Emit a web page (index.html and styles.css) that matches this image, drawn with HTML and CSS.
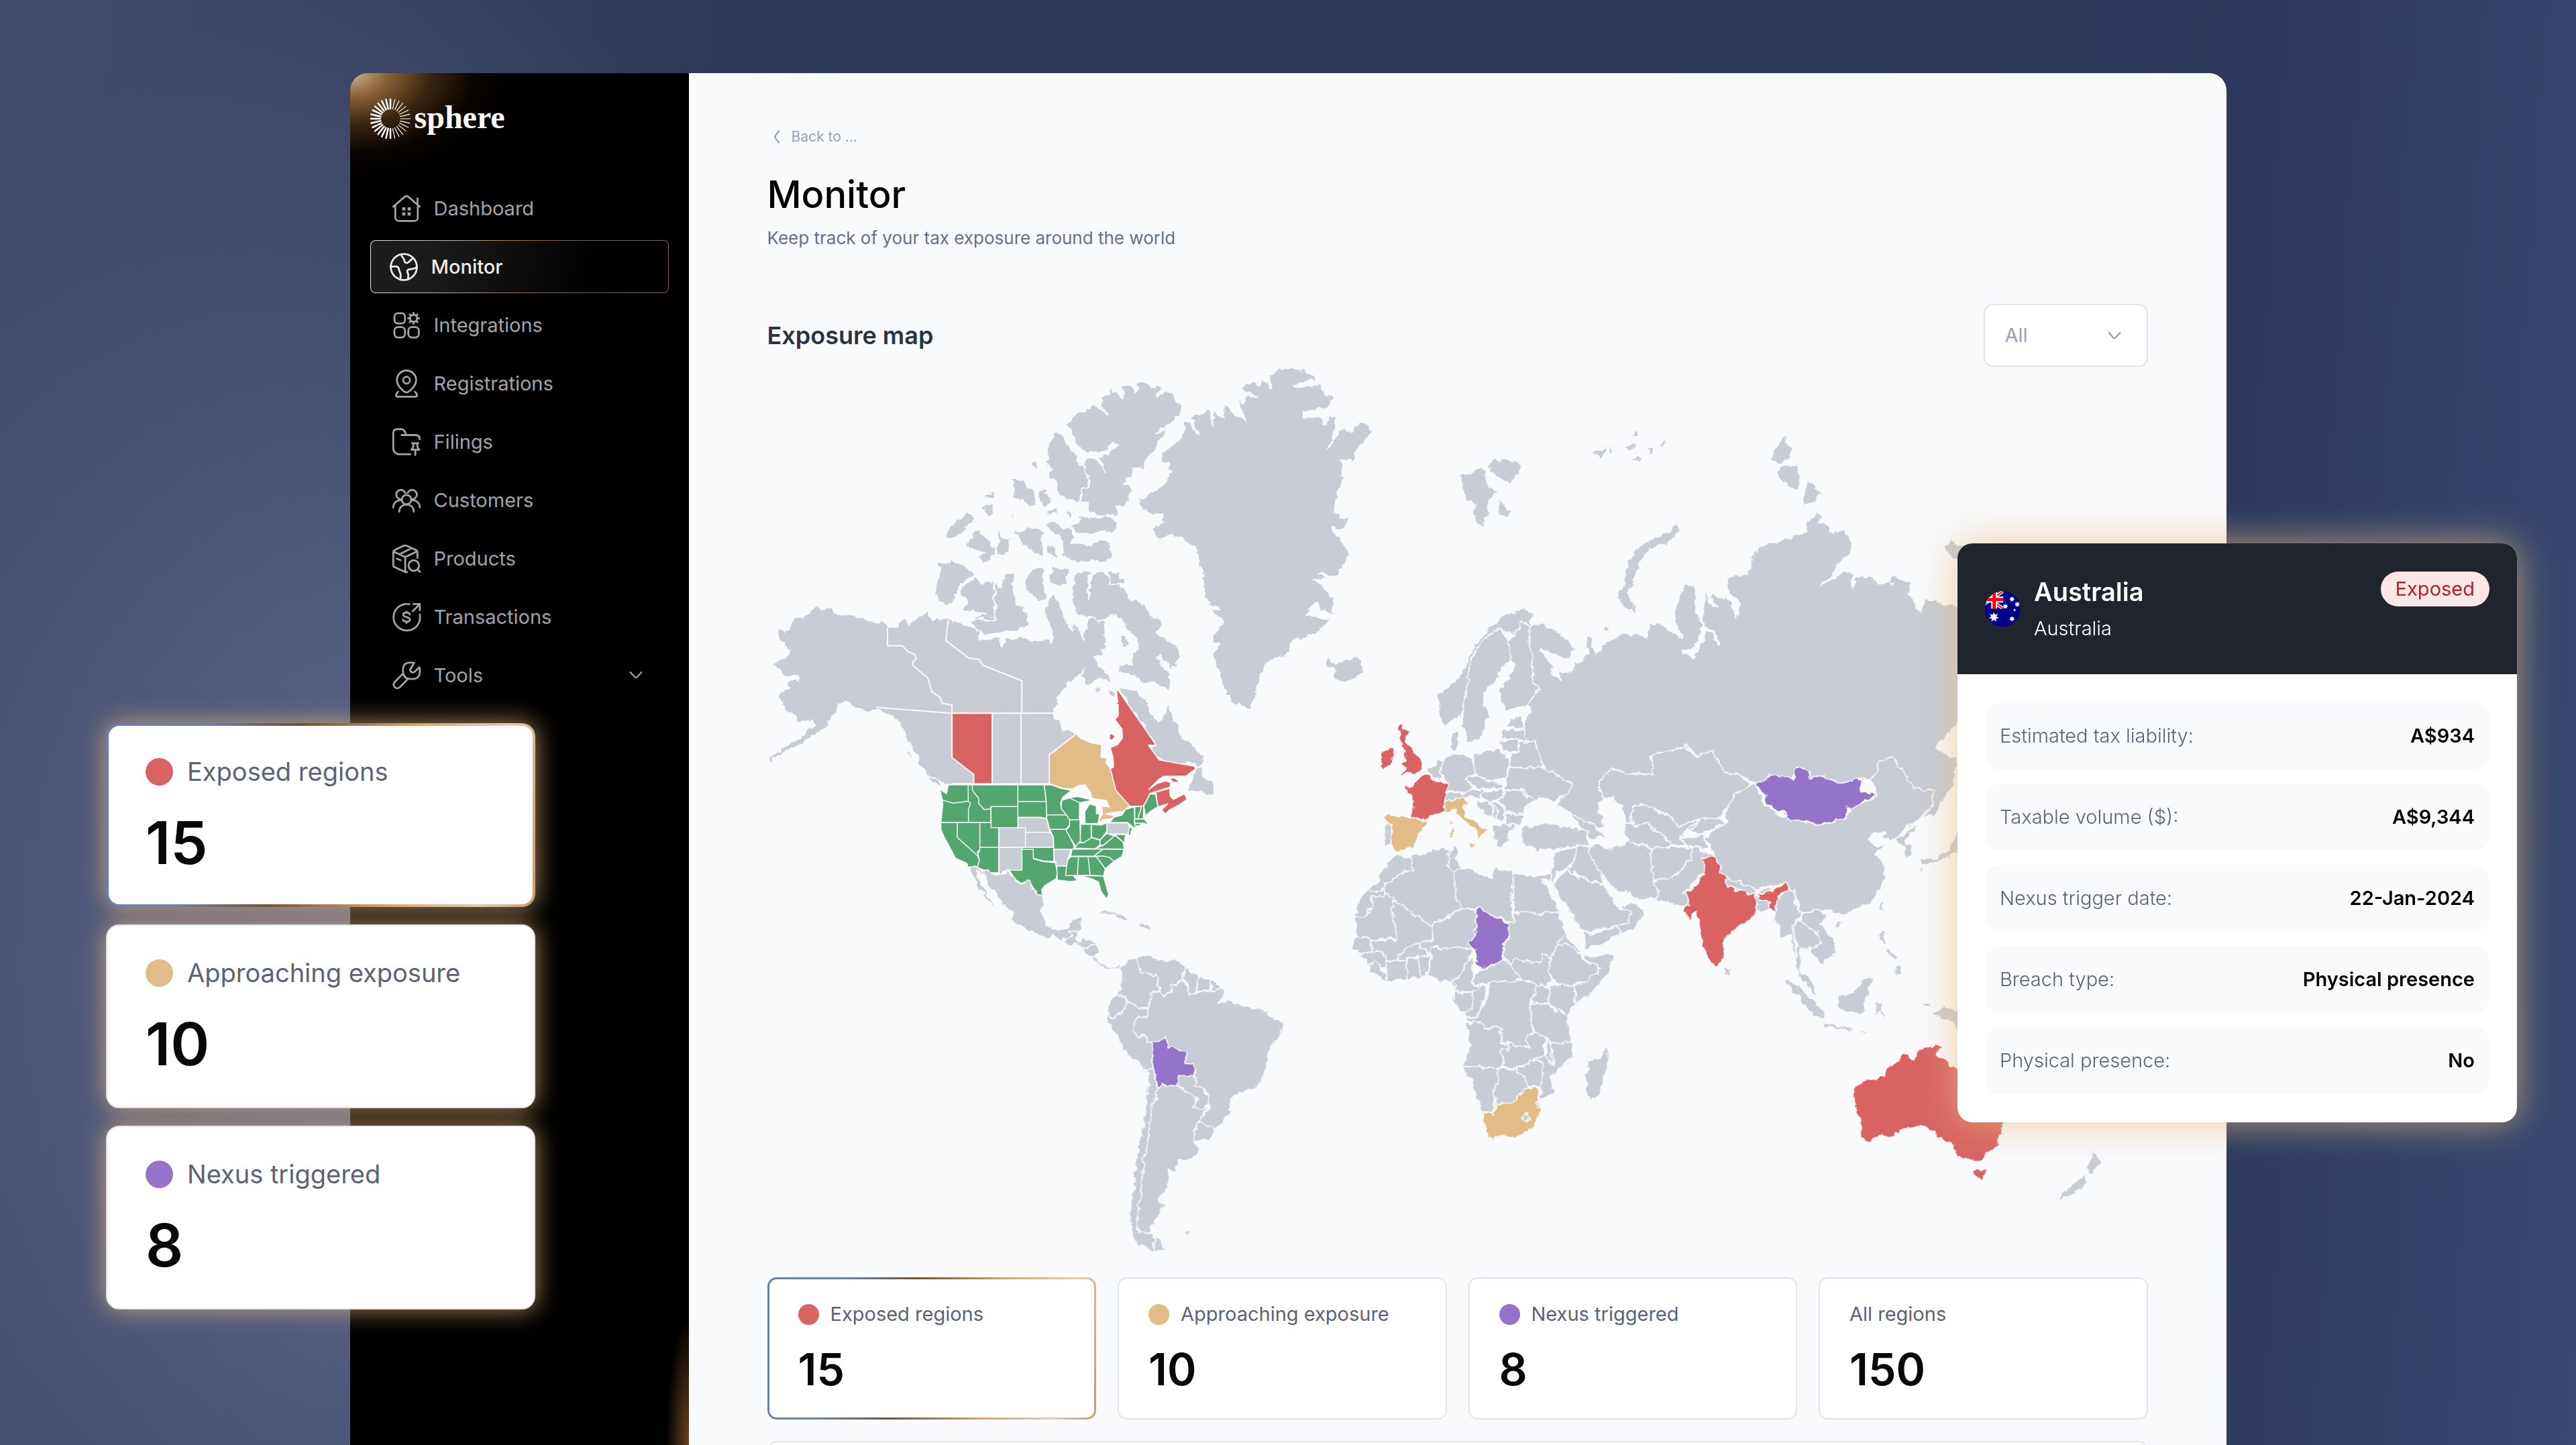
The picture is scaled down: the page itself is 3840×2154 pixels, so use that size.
FILE: index.html
```html
<!DOCTYPE html>
<html lang="en">
<head>
<meta charset="utf-8">
<title>Monitor · sphere</title>
<meta name="viewport" content="width=device-width, initial-scale=1">
<link rel="stylesheet" href="styles.css">
</head>
<body>
<div class="window">
  <aside class="sidebar">
    <a class="brand" href="#">
      <svg class="brand-mark" viewBox="-30 -30 60 60" aria-hidden="true">
        <defs>
          <g id="rays">
            <path d="M0-29.500V-15"/>
            <path d="M0-29.500V-15" transform="rotate(12.860)"/>
            <path d="M0-29.500V-15" transform="rotate(25.710)"/>
            <path d="M0-29.500V-15" transform="rotate(38.570)"/>
            <path d="M0-29.500V-15" transform="rotate(51.430)"/>
            <path d="M0-29.500V-15" transform="rotate(64.290)"/>
            <path d="M0-29.500V-15" transform="rotate(77.140)"/>
          </g>
        </defs>
        <g stroke="#fff" stroke-linecap="round">
          <g stroke-width="1.200"><use href="#rays"/><use href="#rays" transform="rotate(90)"/></g>
          <g stroke-width="2.500"><use href="#rays" transform="rotate(180)"/><use href="#rays" transform="rotate(270)"/><path d="M0-29.500V-15"/></g>
        </g>
      </svg>
      <span class="brand-name">sphere</span>
    </a>
    <nav class="nav">
      <a class="nav-item" href="#">
        <svg class="icon" viewBox="0 0 24 24"><path d="M.7 10.300 10.600 1.800a2.200 2.200 0 0 1 2.800 0l9.900 8.500M2.400 9v10.500a3 3 0 0 0 3 3h13.200a3 3 0 0 0 3-3V9M21.400 3.300v5"/><path class="fill" d="M8.300 10.800h2.700v2.700H8.300zM12.900 10.800h2.700v2.700h-2.700zM8.300 15.200h2.700v2.700H8.300zM12.900 15.200h2.700v2.700h-2.700z"/></svg>
        Dashboard</a>
      <a class="nav-item active" href="#" aria-current="page">
        <svg class="icon" viewBox="0 0 24 24"><circle cx="12" cy="12" r="11.100"/><path d="M9.800 1.200c.2 3 2.600 3 2.600 5.200 0 1.500 1.500 2.600 3 1.900 1.800-.9 2-2.400 4.500-3.700M.9 11.800c3.500-.6 6.700-.6 6.900 1.800.2 2.800 1.900 3.500 1.500 6-.2 1.200-.3 2-.2 3.200M23 12.200c-3 2.300-7.700.8-8.100 3.100-.3 1.700 1.300 2.200.9 4-.2 1.200-.2 2-.1 3"/></svg>
        Monitor</a>
      <a class="nav-item" href="#">
        <svg class="icon" viewBox="0 0 24 24"><rect x="1.700" y="1.600" width="9" height="8.800" rx="3"/><rect x="1.700" y="13.500" width="9" height="8.800" rx="3"/><rect x="13.500" y="13.500" width="9" height="8.800" rx="3"/><circle cx="18" cy="6" r="3"/><path stroke-width="1.700" d="M18 1.400v1.400M18 9.200v1.400M13.400 6h1.400M21.200 6h1.400M14.700 2.700l1 1M20.300 8.300l1 1M14.700 9.300l1-1M20.300 3.700l1-1"/></svg>
        Integrations</a>
      <a class="nav-item" href="#">
        <svg class="icon" viewBox="0 0 24 24"><path d="M12 19.300c-1.600 0-8.200-4.700-8.200-10.400a8.200 8.200 0 0 1 16.400 0c0 5.700-6.600 10.400-8.200 10.400z"/><circle cx="12" cy="9" r="2.900"/><path d="M4.800 18.800c-2.400 2.600-2.300 4.300.2 4.300h14c2.500 0 2.600-1.700.2-4.300"/></svg>
        Registrations</a>
      <a class="nav-item" href="#">
        <svg class="icon" viewBox="0 0 24 24"><path d="M15.200 22.300H5.500a4.800 4.800 0 0 1-4.800-4.800V4a3 3 0 0 1 3-3h3.500c3 0 3.400 2 4.500 5M7.800 6H19.500c2.500 0 3.800 1 3.800 3.500M16.800 13h5.200M17.600 13.200c.7 2 .3 3.500-1.500 5.300h6.800c-1.800-1.800-2.200-3.300-1.500-5.300M19.500 18.600v4.400"/></svg>
        Filings</a>
      <a class="nav-item" href="#">
        <svg class="icon" viewBox="0 0 24 24"><circle cx="12" cy="11.300" r="4"/><path d="M8.200 10.900A4 4 0 1 1 11 5.600M15.800 10.900A4 4 0 1 0 13 5.600M5.800 21.500c0-8 12.400-8 12.400 0M.7 18c0-4 2.800-6.200 6.600-6.200M23.300 18c0-4-2.800-6.200-6.600-6.200"/></svg>
        Customers</a>
      <a class="nav-item" href="#">
        <svg class="icon" viewBox="0 0 24 24"><path d="M12.500 23.200c-1 .4-1.600.2-2.500-.3l-8-3.800c-1-.5-1.300-1-1.300-2V6.500c0-1 .4-1.500 1.300-2L9.200 1c1.200-.6 2-.6 3.200 0L20 4.500c1 .5 1.300 1 1.300 2v4.800M1 5.800l9.900 4.700 9.800-4.700M10.900 10.500v12.500M6 8.200l9.800-5M3.800 11.800l3 1.400"/><circle cx="18.200" cy="17.700" r="4.500"/><path d="m21.500 21.200 2 2"/></svg>
        Products</a>
      <a class="nav-item" href="#">
        <svg class="icon" viewBox="0 0 24 24"><path d="M14.500 1A11.300 11.300 0 1 0 23.300 9.800M17.400 6.800l5.800-5.900M17.900.8h5.400v5.300"/><path d="M14.800 9.600c-.5-2-5.600-2.100-5.600.2 0 2.600 5.700 1.700 5.700 4.300 0 2.400-5.400 2.200-5.900 0M12 7.200v1M12 16v1"/></svg>
        Transactions</a>
      <button class="nav-item" type="button">
        <svg class="icon" viewBox="0 0 24 24"><path d="M18.500 1.200c-4.800-.7-9.500-.2-9.500 5.600 0 1.600 0 2.600.2 3.400L2 17.400c-3 3.200 1.400 7.300 4.400 4.400l7-7.100c5.600.7 9.900-.1 9.900-5.500 0-1.700.1-3-.4-4.200l-3.700 3.600c-2.400 2.300-5.400-.8-3.200-3.200zM9.400 10.500c.5 2.600 1.600 3.900 4 4.200"/></svg>
        Tools
        <svg class="caret" viewBox="0 0 24 24"><path d="m2 6 7.800 8.800a3 3 0 0 0 4.400 0L22 6"/></svg>
      </button>
    </nav>
  </aside>

  <main class="content">
    <a class="back" href="#"><svg class="back-icon" viewBox="0 0 24 24"><path d="m16 1.500-6.500 8.300a3.500 3.500 0 0 0 0 4.400l6.500 8.300"/></svg>Back to ...</a>
    <h1>Monitor</h1>
    <p class="lead">Keep track of your tax exposure around the world</p>

    <div class="section-head">
      <h2>Exposure map</h2>
      <div class="select">
        <select aria-label="Filter regions"><option>All</option></select>
        <svg class="caret" viewBox="0 0 24 24" aria-hidden="true"><path d="m2 6 7.800 8.800a3 3 0 0 0 4.400 0L22 6"/></svg>
      </div>
    </div>

    <svg class="map" viewBox="1143 547 2058 1357" role="img" aria-label="World map of tax exposure">
      <defs>
        <filter id="coast" x="-5%" y="-5%" width="110%" height="110%">
          <feTurbulence type="fractalNoise" baseFrequency=".09" numOctaves="3" seed="4"/>
          <feDisplacementMap in="SourceGraphic" scale="11" xChannelSelector="R" yChannelSelector="G"/>
        </filter>
      </defs>

      <!-- Arctic and northern Canada -->
      <g filter="url(#coast)">
      <g transform="translate(1120 540) scale(.6122 .4209)">
        <path class="mass" d="M157 862 168 875 195 880 205 893 240 895 262 912 290 915 300 925 318 922 330 940 487 1243 302 1222 290 1235 262 1228 245 1208 225 1198 208 1210 200 1240 185 1265 180 1290 155 1310 135 1335 110 1355 80 1375 45 1408 75 1370 105 1345 125 1322 150 1295 155 1268 140 1262 110 1272 108 1240 85 1230 70 1190 75 1170 92 1155 90 1138 118 1132 115 1100 80 1105 52 1070 90 1042 95 1020 68 975 68 958 92 952 105 910 130 900Z"/>
        <path class="mass" d="M330 940 350 940 372 915 378 945 395 915 410 905 425 882 437 925 455 912 478 912 500 1000 657 1128V1243H487Z"/>
        <path class="mass" d="M478 912 520 935 550 950 548 985 600 985 612 1012 620 985 650 980 690 992 722 985 735 1008 735 960 720 900 718 870 735 820 748 860 760 920 780 960 782 935 795 950 805 1005 815 960 820 910 855 915 858 1000 850 1035 825 1040 865 1110 868 1125 845 1115 820 1140 805 1110 812 1050 800 1100 770 1130 760 1155 740 1190 734 1243H657V1128L472 985Z"/>
        <path d="M545 760 560 778 590 775V910H525L570 893 540 885 512 880 525 850 505 820 512 795ZM592 778 605 800 612 760 625 740 642 750 635 790 645 855 672 895 675 930 640 950 620 945 600 960 562 965 545 945 525 912 590 910ZM452 712 485 702 518 718 541 755 512 780 495 830 490 855 470 863 442 825 448 790 458 742Z"/>
        <path d="M520 655 535 610 550 597 570 620 582 648 593 650V685L565 712 550 690 565 675ZM600 577 608 620 630 625V670L597 687ZM470 620 480 590 510 545 535 532 538 560 515 600 490 625ZM560 483 588 453 595 483ZM560 510 592 500 588 540 570 545ZM632 412 655 412 670 440 690 460 692 510 680 517 660 490 640 480ZM700 450 715 455 732 490 715 517 700 500ZM628 520 642 550 637 560ZM640 590 660 600 672 580 690 585 708 600V680L685 682 670 655 655 640Z"/>
        <path d="M715 570 730 562 748 580 775 590 785 615 780 640 805 640 820 650 840 635 860 633 875 650V700L830 705 790 708 775 695 758 690 755 640 745 605 725 600ZM720 650 740 650 745 695 730 695 715 670ZM772 580 795 570 800 550 885 548 890 575 875 612 855 598 800 608ZM720 518 747 520 745 538 722 538ZM765 525 778 530V552L768 545ZM682 350H694V382L684 370Z"/>
        <path d="M738 247 755 250 765 275 775 310 790 325 800 360 825 400 820 430 805 450 795 493 760 485 738 450 740 425 722 405 730 380 715 350 722 300Z"/>
        <path d="M762 220 790 180 812 178 825 142 845 165 865 187 850 150 850 125 872 110 870 90 905 125 898 80 920 78 935 105 940 75 965 70 975 85 997 92 985 120 1010 98 1025 105 1028 130 1047 155 1040 190 1015 218 985 250 1013 235 995 280 975 325 958 350 955 380 925 375 935 395 910 410 905 432 922 440 920 480 908 507 890 510 890 540 850 545 820 530 818 500 800 495 805 450 825 430 810 370 812 335 838 338 860 388 845 335 880 308 895 290 880 285 860 315 820 320 790 300 785 275 778 240Z"/>
        <path d="M660 770 685 735 708 725 712 790 715 840 698 853 680 820 665 805ZM728 725 775 730 765 790 740 792 725 790Z"/>
        <path d="M780 800 790 750 820 736 825 745 815 790 822 838 820 780 835 745 862 742 870 785 895 790 925 835 955 860 970 890 992 915 995 935 985 960 1015 985 1045 1025 1040 1055 1025 1085 990 1040 1005 1085 1018 1110 1017 1165 975 1130 950 1135 930 1105 890 1100 895 1070 925 1070 925 1040 940 1010 935 975 905 930 885 895 850 915 820 905 790 895 780 860ZM864 740 895 745 908 785 880 788 870 780ZM897 970 915 975 917 1005 900 1008ZM835 1150l15-5 2 15-12 12ZM868 1165h12l2 18-10 3Z"/>
        <path d="M1262 45 1280 30 1340 22 1378 60 1322 80 1325 90 1385 78 1395 110 1418 130 1405 160 1342 178 1342 198 1380 192 1398 222 1405 190 1420 190 1420 240 1403 305 1430 245 1445 228 1460 250 1478 213 1500 215 1512 243 1490 285 1465 325 1468 348 1435 350 1440 420 1425 465 1418 530 1448 560 1445 590 1410 590 1440 640 1455 680 1440 720 1428 750 1425 765 1380 745 1400 765 1365 770 1395 800 1415 835 1417 893 1385 880 1375 850 1350 890 1380 905 1412 910 1375 960 1320 985 1300 1040 1270 1050 1245 1075 1240 1110 1228 1150 1215 1238 1190 1210 1170 1205 1145 1140 1135 1090 1120 1030 1140 1000 1120 990 1130 950 1150 920 1115 880 1140 870 1105 850 1100 780 1085 690 1075 655 1025 612 990 628 972 590 1000 570 1000 535 975 540 945 510 943 485 1005 435 1015 400 1018 360 995 355 998 320 1045 270 1055 205 1090 255 1068 195 1105 162 1115 170 1120 228 1128 165 1150 205 1148 148 1202 213 1180 130 1198 150 1200 120 1232 122 1188 95 1218 65 1235 85 1243 57 1262 90Z"/>
        <path d="M1400 1045 1420 1070 1440 1055 1475 1045 1490 1070 1488 1100 1445 1137 1415 1120 1420 1090 1395 1070Z"/>
        <path d="M893 1158 930 1162 960 1195 972 1240 990 1272 1005 1240 1015 1218 1030 1265 1045 1320 1075 1360 1098 1395 1100 1425 1082 1437 1075 1427 991 1407 966 1356 983 1356ZM1082 1440 1098 1428 1100 1465 1125 1490 1125 1535 1095 1520 1063 1518 1070 1480Z"/>
        <path class="mass" d="M302 1222 487 1243V1488H470L430 1465 415 1435 395 1370 372 1300 345 1250Z"/>
        <path d="M418 1450 460 1490 468 1503 440 1490ZM375 1378 385 1380 393 1425Z"/>
      </g>
      </g>

      <!-- Canadian provinces -->
      <g transform="translate(1120 540) scale(.6122 .4209)">
        <path class="mass" d="M465 1250H487V1400L540 1460V1488H470Z"/>
        <path class="line" d="M330 940V1004H366L380 1025 396 1035 400 1052 392 1060V1074L428 1118 438 1167 458 1187 463 1208 487 1214V1243M478 912 472 985 528 1048 552 1052 563 1074 657 1128V1243M302 1222 487 1243H734"/>
        <path d="M585 1243H655V1493H585ZM655 1243H734L736 1262 750 1265 756 1305 770 1300 790 1316 724 1390V1493H655Z"/>
        <path class="exposed" d="M487 1243H585V1493H540V1460L487 1400Z"/>
      </g>

      <!-- North America, south of the 60th parallel -->
      <g class="fine" transform="translate(1360 1000) scale(.3333)">
        <path class="near" d="M731 282 750 302 795 322 843 330 840 385 868 392 862 410 883 438 908 535 970 603 940 628 898 632 860 640 898 648 895 660 850 665 828 682 835 660 848 640 845 605 878 608 865 580 835 575 800 570 795 545 770 510 740 512 715 528 670 525 610 505V377Z"/>
        <path class="exposed" d="M910 88H918L1087 332H1052L1100 398 1255 426 1266 436 1222 470 1120 472 1100 485 1055 530 1090 505 1130 492 1152 500 1150 520 1060 548 1045 580 1030 605H970L908 535 883 438 897 430 895 390 883 343 915 330 937 300 935 260 903 218 918 200 918 150 903 150 916 140Z"/>
        <path class="exposed" d="M1062 550 1148 525 1150 560 1165 575 1190 562 1215 550 1225 575 1190 600 1150 620 1128 640 1112 622 1140 595 1095 608 1087 548ZM1145 480H1170L1195 498H1165ZM1185 548 1197 536 1199 546ZM876 180H882L874 190ZM880 278 905 292 890 310 878 305Z"/>
        <g class="clear">
          <path d="M120 530 150 550 158 510H247V583L180 592 132 578ZM132 578 180 592 247 583 257 592 248 620V678H125L133 600ZM247 510H265L266 535 293 570 295 595 318 620 348 617V678H248V620L257 592 247 583ZM265 510H469V607H348V617L318 620 295 595 293 570 266 535ZM349 607H469V701H349ZM469 510H587L596 584H469ZM469 584H596L598 660 570 655H469Z"/>
          <path d="M299 679H349V701H383V789H299ZM299 789H383V903H350L288 880 297 845 288 810 299 800ZM198 679H299V800L288 826 198 745ZM125 679H198V745L288 826 297 845 288 878 248 880 240 860 190 838 165 790 140 745 125 710Z"/>
          <path d="M587 510H620L660 525 708 535 670 565 660 590 663 615 686 644H598L596 584ZM598 644H686L705 670 700 690 684 709H612L598 660ZM612 709H684L705 750 722 785 715 798H630L628 745ZM487 789H630V853L580 850 538 838V798H487ZM487 798H538V840L580 852 638 858 645 905 640 930 590 960 575 980 580 1005 555 1000 520 940 485 950 460 935 430 892H487ZM642 872H690L688 910H712L735 938 700 942 645 935 645 905Z"/>
          <path d="M665 580 700 568 745 590 744 666H700L686 644 663 615ZM700 568 735 562 805 578 745 590ZM770 684 768 630 790 595 820 605 820 640 835 640 828 682ZM700 666H746L749 760 728 785 705 750 684 712 700 695ZM750 686H797V747L765 768 748 765ZM798 686 840 690 868 680 866 720 838 755 798 745ZM722 793 740 770 765 768 798 746 835 757 838 775 815 796ZM712 797H850L808 829H705ZM705 831H740L735 915H682L690 850ZM740 831H783L792 914 735 915ZM783 831H820L860 885 852 917 792 914Z"/>
          <path d="M735 914 852 918 875 1000 865 1020 840 985 830 945 800 930 770 922ZM820 831 850 828 880 835 898 852 860 885ZM850 798H943L935 830 898 852 880 835 850 828 808 829ZM815 796 850 780 905 735 940 765 945 797ZM838 755 868 725 905 735 850 782 835 775ZM880 732H950L945 770 905 738ZM965 695 980 705 970 740 960 728ZM898 655 935 645 950 620 990 608 992 690 1015 700 985 700 960 678H880ZM992 607H1022L1005 662H992ZM1022 607 1032 600 1030 662H1006ZM990 663H1035L1055 690 1030 681H990ZM990 682H1030L1000 697ZM1032 605 1048 575 1060 550 1085 552 1095 608 1060 630 1040 648Z"/>
        </g>
        <path d="M470 656H570L598 662 612 722H503V701H470ZM503 722H615L628 745V789H503ZM384 701H503V789H384ZM384 790H487V892H430L400 898V908H384ZM630 798H708L690 850 688 872H640V855L632 850ZM868 680H960L968 700 962 730H866Z"/>
      </g>
      <g filter="url(#coast)">
      <g transform="translate(1360 1000) scale(.3333)">
        <path d="M250 880 288 882 350 908H400L430 893 460 935 485 952 520 940 555 1000 585 1015 577 1075 600 1140 635 1155 690 1145 712 1105 765 1100 745 1150 740 1165H695L705 1190 678 1200 675 1218 630 1185 600 1197 520 1165 450 1120 440 1080 345 980 318 905 285 895 290 920 375 1062 340 1035 330 1010 285 970 275 930Z"/>
        <path d="M695 1163H740L728 1195 750 1203 715 1228 678 1218 690 1195 705 1190ZM728 1215 760 1198 825 1210 790 1230 765 1245ZM765 1245 825 1215 822 1262 820 1300 790 1290ZM815 1078 850 1068 900 1080 975 1115 930 1118 890 1090ZM1003 1130 1040 1128 1078 1148 1020 1155ZM1105 1151h22v6h-22ZM918 1153l24 3-10 5Z"/>
      </g>

      <!-- South America -->
      <g transform="translate(1550 1360) scale(.574 .3444)">
        <path d="M125 195H148L155 215 180 235 205 225 210 250 195 238 175 250 160 235Z"/>
        <path d="M265 175 250 195 262 260 305 275V345H282L288 370 280 415H252L228 378 195 355 212 325 208 240 230 205Z"/>
        <path d="M250 195 290 190 305 205 355 208 378 240 370 262 372 295 340 315 342 340 322 362 308 350 305 275 262 260ZM378 240 410 282 402 345 388 355 382 300 370 290ZM410 282 440 285V338L405 345ZM440 285 465 312 455 342 440 335ZM195 355 228 378 222 405 190 460 175 440 178 385Z"/>
        <path d="M228 378 252 415 280 418 278 448 250 465 243 500 250 535 275 540 276 560 290 562 295 590 288 650 290 670 280 685 225 620 205 545 172 475 172 440 190 460 222 405Z"/>
        <path d="M282 348H308L322 362 342 340 340 315 372 300 388 355 440 338 455 342 467 315 480 352 462 400 490 380 535 410 580 425 610 460 628 468 630 505 618 550 595 590 590 640 580 710 562 760 520 780 495 810 492 870 470 910 450 945 412 900 440 845 435 785 420 755 402 750 398 700 403 680 398 652 378 648 375 605 335 580 325 542 292 562 276 560 275 540 250 535 243 500 250 465 278 448 288 370Z"/>
        <path d="M362 708 400 705 403 752 422 755 428 785 438 790 435 840 420 850 395 845 405 805 370 780 355 748Z"/>
        <path d="M305 765 318 745 355 750 405 805 395 845 420 850 435 845 412 900 400 950 398 985 412 1025 400 1065 358 1073 355 1120 330 1115 335 1165 325 1210 305 1240 322 1270 300 1330 288 1365 292 1388 260 1385 250 1350 262 1200 270 1070 282 940 295 815ZM295 1395 325 1462 295 1465ZM412 900 450 945 440 988 400 985 400 940ZM375 1380l12-10 10 12-15 8Z"/>
        <path d="M280 685 290 672 305 765 295 815 282 940 270 1070 262 1200 250 1350 260 1385 293 1390 295 1465 265 1450 240 1410 232 1320 240 1200 248 1040 265 940 278 770Z"/>
        <path class="nexus" d="M290 562 325 542 335 580 375 605 378 648 398 652 403 680 400 705 362 708 355 748 318 745 305 765 295 690 290 650 295 590Z"/>
      </g>

      <!-- Europe and northern Asia -->
      <g transform="translate(2000 600) scale(.6122 .4464)">
        <path d="M455 745 490 735 540 780 568 825 548 858 480 825 505 860 512 905 535 930 528 890 555 905 565 870 590 860 598 830 592 780 612 790 605 820 620 838 640 800 690 770 740 785 750 735 785 745 825 785 808 720 815 670 832 610 862 615 860 680 875 740 870 790 850 825 828 835 855 855 880 790 885 760 905 770 912 810 920 808 905 760 880 750 875 690 885 610 890 660 915 690 895 650 905 640 950 665 960 720 965 670 935 620 938 580 990 572 998 505 1030 475 1110 440 1130 430 1128 405 1155 365 1170 380 1160 402 1183 410 1190 430 1225 425 1243 465 1240 500 1205 550 1165 615 1225 560 1240 570 1245 620 1250 578 1290 585 1305 605 1335 605 1342 575 1385 600 1380 640 1408 698 1425 655 1470 675 1560 690V1000L1500 1075 1445 1150 1480 1180 1500 1180 1490 1270 1440 1380 1410 1385 1435 1350 1440 1290 1410 1302 1375 1255 1340 1182 1310 1195 1290 1262 1270 1262 1250 1253 1215 1273 1165 1248 1140 1250 1107 1217 1095 1258 1045 1243 1005 1275 965 1240 935 1240 900 1165 860 1180 835 1145 755 1180 755 1240 690 1240 655 1225 620 1280 635 1320 625 1360 640 1420 615 1415 570 1385 540 1355 520 1345 540 1310 558 1270 500 1225 485 1205 470 1135 440 1130 445 1050 462 1030 450 1010 477 955 462 920 462 860 455 800Z"/>
        <path d="M815 407 826 425 790 470 750 490 730 525 710 590 700 640 718 698 690 695 668 655 685 600 690 560 710 500 755 450 800 430ZM1075 113 1095 155 1088 195 1060 207 1040 185ZM1070 210 1110 210 1113 290 1090 285 1055 240ZM1138 257 1165 300 1155 330 1115 345ZM285 232 310 240 320 225 335 215 350 225 350 265 380 300 360 325 355 370 338 425 318 385 325 340 300 325ZM355 215 370 182 385 200 400 185 435 205 430 240 405 265 370 245ZM378 315 390 340 410 360 398 385 380 375Z"/>
        <path d="M605 165l35-18-5 45ZM650 145l14 8-15 24ZM703 112l17-22 6 24ZM688 142l22-14 10 22-22 14ZM738 155l24-7-12 30ZM768 152 791 120V145ZM706 187l26-8-10 26ZM1468 490 1480 455 1500 480 1520 470 1510 510 1485 525ZM636 750h12v18h-12Z"/>
        <path d="M233 975 265 940 300 880 325 800 365 740 395 705 440 688 470 712 455 745 440 725 420 775 380 760 345 785 320 840 305 920 298 1000 290 1050 250 1078 235 1040Z"/>
        <path d="M380 760 405 790 408 865 385 885 380 920 345 970 345 1010 358 1045 335 1125 305 1140 290 1060 298 1000 305 920 320 840 345 785Z"/>
        <path d="M420 775 440 725 455 745 455 800 462 860 462 920 477 955 450 1012 395 1030 382 960 415 900 418 870 408 865 405 790Z"/>
        <path d="M405 1050 440 1048 442 1090 405 1085ZM385 1120V1095L410 1090 442 1095 445 1130ZM385 1125 430 1128V1165L400 1172 385 1155ZM430 1135H470L485 1205 480 1218H405V1172L430 1165ZM408 1220 480 1218 500 1225 558 1270 550 1310 510 1330 480 1320 455 1340 435 1290 395 1295ZM318 1172 370 1158 400 1170 405 1218 400 1262 355 1260 320 1240ZM245 1190 270 1175 315 1180 320 1240 300 1255 320 1285 305 1305 255 1300 257 1275 240 1240ZM262 1110 280 1095 285 1130 275 1165 265 1160ZM205 1235 230 1195 248 1188 240 1240 240 1262Z"/>
        <path d="M250 1305H300L340 1285 345 1300 330 1320 300 1318 250 1332ZM298 1255 320 1242 360 1262 395 1275 390 1290 345 1290 318 1280ZM340 1305 395 1290 390 1320 360 1330 340 1325ZM395 1300 435 1292 465 1330 450 1345 440 1372 395 1368 380 1335ZM325 1330H360L380 1370 375 1400 330 1350ZM360 1330 385 1335 395 1370 390 1400 370 1390ZM395 1370 442 1374 438 1410 400 1410ZM365 1410 395 1412 435 1412 400 1430 405 1460 385 1490 370 1450ZM103 1402 120 1407 115 1480 102 1482Z"/>
        <path d="M435 1420 490 1405 560 1420 595 1430 600 1480 520 1490 470 1495 440 1470ZM555 1370 615 1415 640 1450 605 1455 580 1420Z"/>
        <path d="M620 1280 655 1225 690 1240H755V1180L835 1145 860 1180 900 1165 935 1240H965L995 1272 985 1305 958 1310 950 1345 935 1350 920 1388H870L820 1415 800 1380 730 1342 706 1350V1412L690 1400 680 1350 660 1320 635 1320ZM706 1350 730 1342 800 1380 820 1415 870 1390 850 1430 820 1450 840 1480 805 1475 740 1400 720 1412H706ZM690 1400 720 1412 740 1400 805 1475 755 1510 745 1480 700 1470 685 1440ZM870 1388H920L935 1400 882 1440 840 1430ZM820 1450 882 1445 890 1490 840 1485Z"/>
        <path d="M1002 1275 1030 1345 1085 1390 1162 1408 1225 1385 1245 1350 1302 1315 1290 1260 1310 1195 1340 1182 1375 1255 1410 1302 1440 1290 1435 1350 1410 1385 1385 1410 1345 1460 1310 1462 1325 1430 1290 1440 1280 1460 1300 1480 1325 1470 1298 1510 1317 1540 1322 1594 1287 1674 1217 1709 1172 1694 1112 1704 1102 1644 1077 1604 1007 1624 937 1589 919 1572 907 1514 882 1454 935 1400 935 1350 958 1310 995 1275Z"/>
        <path d="M1345 1460 1395 1410 1400 1415 1370 1465 1390 1480 1388 1515 1370 1520 1365 1480ZM1400 1530 1450 1518 1475 1500 1500 1420H1520L1510 1500 1470 1520 1420 1545ZM1402 1555 1412 1548 1408 1575Z"/>
        <path class="exposed" d="M145 1285 168 1285 172 1270 203 1238 230 1262 257 1275 252 1310 245 1330 252 1370 215 1380 208 1395 170 1385 175 1330 162 1305ZM135 1075 152 1070 150 1090 163 1095 155 1130 178 1170 197 1205 190 1235 137 1248 155 1220 140 1212 158 1190 150 1160 138 1130ZM92 1170 125 1150 127 1165 122 1210 92 1222ZM265 1393 270 1395 269 1413 265 1408Z"/>
        <path class="near" d="M100 1380 115 1376 170 1385 212 1400 185 1440 175 1485 130 1500 115 1480 120 1405 105 1400ZM248 1335 300 1318 308 1340 295 1350 300 1380 352 1430 338 1440 335 1468 325 1425 290 1390 275 1355 252 1370ZM302 1470 325 1472 320 1488ZM262 1420H272L270 1452H262Z"/>
        <path class="nexus" d="M1005 1275 1045 1243 1095 1258 1107 1217 1135 1232 1140 1250 1165 1248 1215 1273 1250 1253 1270 1262 1265 1300 1288 1298 1302 1318 1270 1325 1250 1352 1228 1352 1225 1388 1162 1408 1085 1390 1070 1365 1032 1345 1030 1310Z"/>
      </g>

      <!-- Africa, southern Asia and Oceania -->
      <g transform="translate(1980 1200) scale(.6122 .4464)">
        <path d="M163 165 198 175 205 215 180 225 135 268V285L92 284 122 250 135 205ZM92 284H134V306H104V346L93 372H60L75 310ZM134 290 175 322H153L165 448H118L102 455 85 437 65 435 66 372H93V346H104V306H134ZM175 322 245 400H255L253 450 215 458 190 480 165 515 140 518 130 490 105 492 102 455 118 450H165L153 322Z"/>
        <path d="M198 175 250 148H292L288 195 305 225 308 320 328 343 255 400 245 402 134 290V268L180 225 205 215ZM292 148 312 142 318 160 310 185 322 205 305 225 288 195ZM322 205 360 225 395 245 405 210 448 225V390H438L362 345 328 343 308 320 305 225ZM448 225 485 238 540 232V260L520 248 562 362H450Z"/>
        <path d="M255 400 328 343 358 350 362 405 343 465 348 480 300 478 255 475 250 498 235 490 215 458 253 450ZM450 362H560L575 420 558 462 540 515 520 495 515 525 450 515 440 535 427 508 425 460 438 445V390H450ZM575 420 585 450 615 485 610 490 580 465 558 462ZM558 462 580 465 610 490 620 515 662 548 625 590 590 605 560 600 535 560 540 515ZM620 510 692 498 685 550 650 615 600 668 598 600 625 590 662 548 625 520Z"/>
        <path d="M440 535 450 515 515 525 520 495 540 515 535 560 545 585 530 602 505 600 470 585ZM353 558 370 552 408 533 427 510 440 535 470 585 420 590 390 590 365 605 353 600ZM250 478 300 478 348 480 340 520 325 555 300 590 270 590 243 568 245 520ZM300 590 325 555 348 500 352 600 365 608V625L306 622ZM65 435 85 437 102 455 105 492 65 490 57 460ZM75 495 130 490 140 518 138 545H125L115 525 95 530ZM95 530 115 525 125 545 138 560 145 590 100 555ZM138 518 190 520 188 582 145 590 140 560ZM165 515 190 480 215 458 240 490 235 505 190 508 188 520ZM190 510H217L225 575 188 587ZM219 510 245 495 240 568 225 572Z"/>
        <path d="M306 625H350V680L325 695 302 655ZM350 625 385 600 380 650 360 710H332L325 695 350 680ZM390 590 470 585 505 600 500 640 488 660 492 725 500 757 480 770 485 810 440 798 420 795 418 740 382 748 370 725 332 722V712L360 710 385 650ZM505 600H532L540 630 532 662H490L500 640ZM532 602 560 600 598 602V665L582 708 532 662 540 630ZM490 664H532L582 708 583 760 592 790 545 798 525 775 500 757 490 725Z"/>
        <path d="M332 725 370 725 382 748 418 740 420 795 440 798 438 815 420 818 422 880 327 873 345 800ZM440 798 485 810 480 770 500 757 527 775 525 830 498 850 455 880 420 875V818L438 815ZM540 798 592 790V845L540 905 545 965 518 985 515 940 523 870 498 850 527 830 545 870ZM527 775 537 800 550 840 545 872 530 835ZM327 873 412 880V937H402V1030L370 1025 352 940ZM412 885 455 882 490 942 455 988 410 1003 402 975V937H412ZM455 882 498 852 523 870 515 938 488 940Z"/>
        <path d="M676 810 685 850 655 975 640 985 622 960 630 860 660 840Z"/>
        <path class="near" d="M405 980 410 1003 455 988 470 960 490 942H508L515 990 521 1005 515 1035 495 1075 465 1105 420 1108 400 1120 387 1108 372 1027 402 1032Z"/>
        <path d="M470 1043 482 1032 490 1043 478 1060ZM503 995 513 990 515 1008H505Z"/>
        <path class="nexus" d="M358 350 365 345 438 397V445L425 460 427 510 408 533 370 552 350 525 362 522 355 485 343 465 362 405Z"/>
        <path d="M552 155 605 140 600 180 580 210 552 225 545 262 538 240 545 200ZM605 140 635 145 645 190 662 225 665 262 620 250 580 218 600 180ZM545 262 570 225 580 218 650 262 668 265 690 310 710 350 735 355 730 390 705 405 618 425 590 360 560 300ZM618 425 640 430 703 407 712 432 622 487ZM735 320 773 358 745 410 712 432 703 407 730 390 735 355 710 345Z"/>
        <path d="M632 140 660 130 690 148 730 122 785 145 788 250 803 290 792 315 745 310 725 290 700 285 672 245 645 190ZM785 145 830 140H885L880 180 840 240 788 252ZM885 140 910 150 940 170 908 180 915 220 868 290 878 325 860 335 792 315 803 290 788 252 840 240 880 180ZM965 265 970 245 1040 280V300L1000 285ZM1040 302 1052 318 1075 320 1070 350 1045 362ZM1045 282 1070 277 1075 292 1050 294ZM965 530 978 550 975 570 964 565Z"/>
        <path d="M1098 300 1123 278 1135 285V330L1150 370 1130 400 1140 500 1135 530 1125 430 1102 442 1085 370ZM1130 400 1150 385 1165 410 1190 420 1198 460 1175 475 1150 480 1148 550 1185 600 1188 640 1165 610 1135 535 1140 470ZM1145 365 1195 350 1215 365 1195 400 1230 450 1235 490 1200 535 1175 500V475L1198 460 1190 420 1165 410Z"/>
        <path d="M1107 580 1135 595 1205 690 1202 720 1170 690ZM1205 730 1280 745 1278 755 1205 742ZM1290 755 1330 757V762H1290ZM1370 775 1400 761 1380 777ZM1235 635 1275 630 1300 575 1325 580 1312 630 1300 698 1245 685ZM1330 665 1355 640 1380 638 1345 645 1338 665 1355 660 1345 680 1358 705 1350 710 1340 685 1335 718ZM1343 412 1355 415 1353 465 1340 455ZM1375 548 1393 535V565L1380 570ZM1355 480H1365L1385 510 1375 515ZM1445 660H1465V675L1450 672ZM1470 690 1505 672 1560 690V780L1530 760 1520 725 1480 705ZM1232 398 1247 393V405L1235 413ZM1345 325 1352 321 1346 356 1340 346Z"/>
        <path class="exposed" d="M907 180 940 170 955 210 952 228 970 245 965 265 1000 285 1040 300 1045 360 1020 385 965 445 963 500 940 545 918 500 895 360 878 378 858 345 880 330 868 295 890 270 915 225ZM1040 280 1045 295 1078 292 1110 260 1123 278 1098 300 1085 360 1070 340 1075 318 1050 315Z"/>
        <path class="exposed" d="M1280 940 1305 920 1350 905 1360 870 1375 865 1400 830 1425 848 1435 820 1455 800 1490 808 1480 835 1530 880 1560 880 1600 800 1660 950 1645 1057 1625 1136 1586 1190 1560 1183 1525 1170 1520 1140 1500 1130 1495 1110 1485 1120 1468 1085 1440 1072 1400 1082 1370 1108 1340 1108 1315 1125 1293 1108 1298 1080 1285 1030 1277 970ZM1566 1216 1604 1218 1587 1264Z"/>
        <path d="M1864 1156 1883 1188 1862 1221 1846 1243 1849 1198ZM1838 1237 1849 1254 1805 1310 1777 1315 1789 1288Z"/>
      </g>
      </g>
    </svg>

    <section class="stats" aria-label="Exposure totals">
      <article class="stat selected"><h3><i class="dot red"></i>Exposed regions</h3><p>15</p></article>
      <article class="stat"><h3><i class="dot tan"></i>Approaching exposure</h3><p>10</p></article>
      <article class="stat"><h3><i class="dot violet"></i>Nexus triggered</h3><p>8</p></article>
      <article class="stat"><h3>All regions</h3><p>150</p></article>
    </section>
    <div class="panel"></div>
  </main>
</div>

<aside class="float-stats" aria-label="Summary">
  <article class="stat big selected"><h3><i class="dot red"></i>Exposed regions</h3><p>15</p></article>
  <article class="stat big"><h3><i class="dot tan"></i>Approaching exposure</h3><p>10</p></article>
  <article class="stat big"><h3><i class="dot violet"></i>Nexus triggered</h3><p>8</p></article>
</aside>

<section class="popover" aria-label="Australia details">
  <header class="popover-head">
    <svg class="flag" viewBox="0 0 54 54" role="img" aria-label="Flag of Australia">
      <clipPath id="round"><circle cx="27" cy="27" r="27"/></clipPath>
      <g clip-path="url(#round)">
        <path fill="#00008b" d="M0 0h54v54H0z"/>
        <path stroke="#fff" stroke-width="5" d="M-12 0 28 27M28 0-12 27"/>
        <path stroke="#f00" stroke-width="2" d="M-12 0 28 27M28 0-12 27"/>
        <path stroke="#fff" stroke-width="9" d="M14 0v27M0 13h28"/>
        <path stroke="#f00" stroke-width="5" d="M14 0v27M0 13h28"/>
        <path fill="#00008b" d="M28 0h26v54H0V27h28z"/>
        <path fill="#fff" d="m13.500 32 1.800 4.200 4.300-1.500-2.200 4 4 2.300-4.600.8.300 4.700-3.600-3-3.600 3 .3-4.700-4.600-.8 4-2.300-2.200-4 4.300 1.500z"/>
        <path id="star" fill="#fff" d="m41 8 1 2.200 2.500-.6-1.200 2.200 2 1.500-2.500.4.100 2.500-1.900-1.700-1.900 1.700.1-2.500-2.500-.4 2-1.500-1.200-2.200 2.500.6z"/>
        <use href="#star" x="8" y="8"/><use href="#star" x="-10" y="11"/><use href="#star" y="30"/>
        <circle cx="45" cy="29" r="1.500" fill="#fff"/>
      </g>
    </svg>
    <div class="place"><h2>Australia</h2><p>Australia</p></div>
    <span class="badge">Exposed</span>
  </header>
  <dl class="facts">
    <div><dt>Estimated tax liability:</dt><dd>A$934</dd></div>
    <div><dt>Taxable volume ($):</dt><dd>A$9,344</dd></div>
    <div><dt>Nexus trigger date:</dt><dd>22-Jan-2024</dd></div>
    <div><dt>Breach type:</dt><dd>Physical presence</dd></div>
    <div><dt>Physical presence:</dt><dd>No</dd></div>
  </dl>
</section>
</body>
</html>
```
FILE: styles.css
```css
* { box-sizing: border-box; }
h1, h2, h3, p, dl, dd { margin: 0; font-weight: inherit; }

:root {
  --red: #d96363;
  --tan: #e2bc86;
  --violet: #9573c8;
  --land: #c8ccd5;
  --paper: #f9fafc;
  --edge: linear-gradient(100deg, #6a80ab 0%, #6a80ab 22%, #6d5136 42%, #d8a56e 68%, #e2cdb3 88%, #c89a66 100%);
}

body {
  margin: 0;
  height: 100vh;
  overflow: hidden;
  position: relative;
  padding-top: 109px;
  font-family: Inter, "Liberation Sans", sans-serif;
  background:
    radial-gradient(ellipse 900px 1500px at 15% 68%, #61688c, rgba(97, 104, 140, 0)),
    linear-gradient(94deg, #434b6b 0%, #2b3757 32%, #2b3757 60%, #2c395c 84%, #374970 100%);
}

.window {
  width: calc(100% - 1043px);
  margin: 0 auto;
  min-height: 100%;
  display: flex;
  border-radius: 26px 26px 0 0;
  overflow: hidden;
  background: var(--paper);
}

/* Sidebar */
.sidebar {
  flex: 0 0 505px;
  padding: 38px 30px;
  background:
    radial-gradient(ellipse 250px 160px at 0 0, #cbb893 0%, #8a6236 22%, #3a2410 48%, rgba(14, 7, 0, .6) 74%, transparent 100%),
    radial-gradient(ellipse 34px 190px at 100% 2045px, #6b4320, transparent),
    #000;
}
.brand {
  display: flex;
  align-items: center;
  gap: 6px;
  height: 60px;
  color: #fff;
  text-decoration: none;
}
.brand-mark { width: 60px; height: 60px; }
.brand-name { font: bold 48px/60px "Liberation Serif", serif; margin-top: -4px; }
.nav { display: flex; flex-direction: column; gap: 8px; margin-top: 64px; }
.nav-item {
  display: flex;
  align-items: center;
  gap: 20px;
  height: 79px;
  padding: 0 33px;
  border: 0;
  background: none;
  font: 29px/40px Inter, "Liberation Sans", sans-serif;
  color: #a3a3a3;
  text-decoration: none;
  text-align: left;
}
.nav-item.active {
  padding: 0 28px;
  color: #f0ebe8;
  font-weight: 500;
  border: 1px solid transparent;
  border-radius: 8px;
  background:
    linear-gradient(100deg, #1b1b1b 20%, #000 75%) padding-box,
    linear-gradient(100deg, #e0e0e0 0%, #c0bbb6 24%, #96703a 52%, #606068 74%, #8a6840 100%) border-box;
}
.icon { width: 42px; height: 42px; }
.icon, .caret, .back-icon {
  flex: none;
  fill: none;
  stroke: currentColor;
  stroke-width: 1.6;
  stroke-linecap: round;
  stroke-linejoin: round;
  overflow: visible;
}
.icon .fill { fill: currentColor; stroke: none; }
.caret { width: 20px; height: 20px; margin-left: auto; stroke-width: 2.6; }
.nav-item .caret { margin-right: 6px; }

/* Main column */
.content { flex: 1; min-width: 0; padding: 81px 117px 0; }
.back {
  display: flex;
  align-items: center;
  gap: 12px;
  width: max-content;
  padding-left: 4px;
  font-size: 21px;
  line-height: 28px;
  color: #98a2b8;
  text-decoration: none;
}
.back-icon { width: 20px; height: 20px; stroke-width: 2.6; }
h1 { margin-top: 40px; font-size: 56px; line-height: 64px; font-weight: 500; color: #000; }
.lead { margin-top: 15px; font-size: 26px; line-height: 36px; color: #667089; }
.section-head { display: flex; align-items: center; justify-content: space-between; margin-top: 80px; }
.section-head h2 { font-size: 36px; line-height: 44px; font-weight: 600; color: #2b333f; }
.select { position: relative; width: 245px; height: 94px; }
.select select {
  appearance: none;
  width: 100%;
  height: 100%;
  padding: 0 30px;
  border: 2px solid #e0e4ea;
  border-radius: 14px;
  background: #fff;
  font: 29px/40px Inter, "Liberation Sans", sans-serif;
  color: #98a2b8;
}
.select .caret { position: absolute; right: 40px; top: 38px; color: #8f99ae; }

/* Map */
.map { display: block; width: 100%; height: auto; overflow: visible; }
.map path { fill: var(--land); stroke: var(--paper); stroke-width: 2; stroke-linejoin: round; vector-effect: non-scaling-stroke; }
.map .fine path { stroke-width: 1.5; }
.map path.mass { stroke: var(--land); }
.map path.line { fill: none; }
.map path.exposed { fill: var(--red); }
.map path.near { fill: var(--tan); }
.map path.nexus { fill: var(--violet); }
.map .clear path { fill: #53a66d; }

/* Totals */
.stats { display: grid; grid-template-columns: repeat(4, 1fr); gap: 32px; }
.stat {
  padding: 33px 44px 37px;
  border: 2px solid #e2e5eb;
  border-radius: 14px;
  background: #fff;
}
.stat h3 {
  display: flex;
  align-items: center;
  gap: 17px;
  font-size: 29px;
  line-height: 40px;
  color: #5c6375;
  white-space: nowrap;
}
.stat p { margin-top: 26px; font-size: 66px; line-height: 72px; font-weight: 600; color: #07080a; }
.stat.selected {
  padding: 32px 43px 36px;
  border: 3px solid transparent;
  background: linear-gradient(#fff, #fff) padding-box, var(--edge) border-box;
}
.dot { width: 31px; height: 31px; border-radius: 50%; }
.dot.red { background: var(--red); }
.dot.tan { background: var(--tan); }
.dot.violet { background: var(--violet); }
.panel { height: 200px; margin-top: 32px; border: 2px solid #e2e5eb; border-radius: 14px; background: #fff; }

/* Cards lifted over the window */
.float-stats {
  position: absolute;
  left: 158px;
  top: 1078px;
  width: 640px;
  display: grid;
  gap: 26px;
}
.stat.big, .stat.big.selected {
  padding: 42px 55px 44px;
  border-width: 4px;
  border-radius: 20px;
  box-shadow: 0 0 36px rgba(232, 186, 124, .75);
}
.stat.big:not(.selected) { padding: 44px 57px 46px; border-width: 2px; }
.stat.big h3 { gap: 21px; font-size: 38px; line-height: 52px; }
.stat.big p { margin-top: 32px; font-size: 88px; line-height: 96px; }
.stat.big .dot { width: 41px; height: 41px; }

.popover {
  position: absolute;
  right: 88px;
  top: 810px;
  width: 834px;
  border-radius: 22px;
  overflow: hidden;
  background: #fff;
  box-shadow: 0 0 56px rgba(232, 186, 124, .75);
}
.popover-head {
  display: flex;
  align-items: center;
  gap: 20px;
  padding: 48px 41px;
  background: #20252d;
  color: #fff;
}
.flag { width: 53px; height: 53px; }
.place h2 { font-size: 38px; line-height: 48px; font-weight: 600; }
.place p { margin-top: 11px; font-size: 29px; line-height: 40px; font-weight: 300; }
.badge {
  align-self: flex-start;
  margin: -6px 0 0 auto;
  padding: 6px 22px;
  border-radius: 26px;
  background: #fae7e6;
  color: #b0242a;
  font-size: 29px;
  line-height: 40px;
}
.facts { display: grid; gap: 21px; padding: 42px 41px; }
.facts div {
  display: flex;
  align-items: center;
  justify-content: space-between;
  height: 100px;
  padding: 0 22px;
  border-radius: 22px;
  background: var(--paper);
  font-size: 29px;
  line-height: 40px;
}
.facts dt { font-weight: 300; color: #5c6375; }
.facts dd { font-weight: 600; color: #000; }
```
